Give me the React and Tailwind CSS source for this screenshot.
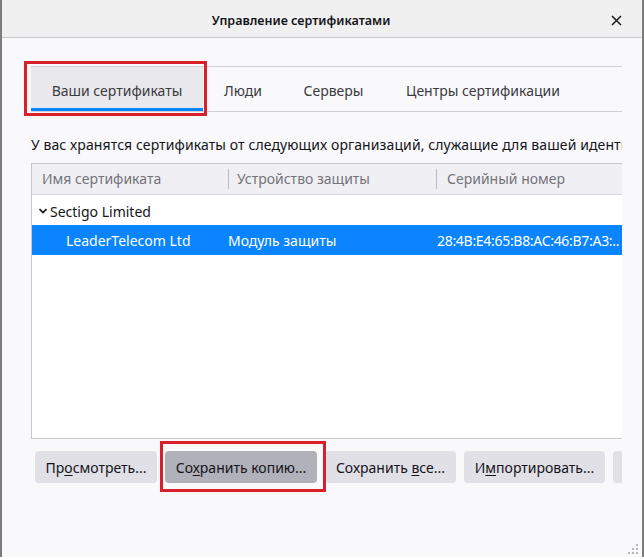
import React from "react";

const tabs = [
  { name: "Ваши сертификаты", w: "w-[172px]", active: true },
  { name: "Люди", w: "w-[80px]" },
  { name: "Серверы", w: "w-[101px]" },
  { name: "Центры сертификации", w: "w-[198px]" },
];

function Chevron() {
  return (
    <svg width="8" height="6" viewBox="0 0 8 6" className="mr-[3px]">
      <path d="M0.5 1 L4 4.5 L7.5 1" fill="none" stroke="#15141a" strokeWidth="1.6" />
    </svg>
  );
}

function Btn({ w, pressed, children }) {
  return (
    <div
      className={`${w} h-[32px] shrink-0 rounded-[4px] flex items-center justify-center text-[14px] text-[#15141a] ${
        pressed ? "bg-[#b1b1b9]" : "bg-[#e0e0e6]"
      }`}
    >
      <span className="whitespace-pre">{children}</span>
    </div>
  );
}

const U = ({ children }) => <span className="underline underline-offset-2">{children}</span>;

export default function App() {
  return (
    <div className="relative w-[644px] h-[557px] overflow-hidden bg-[#f9f9fb] border-x-2 border-[#7d7d7d] font-['Noto_Sans',sans-serif] text-[#15141a]">
      {/* Title bar */}
      <div className="h-[38px] bg-[#f0f0f0] border-b border-[#c8c8cc] flex items-center justify-center relative pr-[42px] pt-[5px]">
        <span className="text-[12.5px] font-semibold">Управление сертификатами</span>
        <svg width="11" height="11" viewBox="0 0 11 11" className="absolute right-[20px] top-[15px]">
          <path d="M1 1 L10 10 M10 1 L1 10" stroke="#1a1a1a" strokeWidth="1.5" />
        </svg>
      </div>

      {/* Body */}
      <div className="ml-[29px] w-[591px] overflow-hidden">
        {/* Tabs */}
        <div className="mt-[28px] border-y border-[#cfcfd8] flex h-[46px]">
          {tabs.map((t) => (
            <div
              key={t.name}
              className={`${t.w} shrink-0 h-[44px] flex flex-col ${t.active ? "bg-[#e9e9ed]" : ""}`}
            >
              <div className="flex-1 flex items-center justify-center pt-[5px] text-[14px] text-[#3a3a40] whitespace-nowrap">
                {t.name}
              </div>
              <div className={`h-[3px] ${t.active ? "bg-[#0a84ff]" : ""}`} />
            </div>
          ))}
        </div>

        {/* Description */}
        <div className="mt-[22px] h-[22px] text-[14px] tracking-[0.1px] whitespace-nowrap leading-[22px]">
          У вас хранятся сертификаты от следующих организаций, служащие для вашей идентификации:
        </div>

        {/* Table */}
        <div className="mt-[7px] h-[276px] w-[600px] border border-[#c8c8cc] bg-white">
          <div className="h-[31px] bg-[#f0f0f4] border-b border-[#d8d8dc] flex items-center text-[14px] text-[#73737a]">
            <div className="w-[197px] pl-[10px] border-r border-[#bcbcc0] h-[20px] leading-[20px]">Имя сертификата</div>
            <div className="w-[208px] pl-[8px] border-r border-[#bcbcc0] h-[20px] leading-[20px]">Устройство защиты</div>
            <div className="pl-[10px] h-[20px] leading-[20px]">Серийный номер</div>
          </div>
          <div className="h-[30px] flex items-center pl-[7px] pt-[2px] text-[14px]">
            <Chevron />
            Sectigo Limited
          </div>
          <div className="h-[30px] flex items-center pt-[1px] bg-[#0a84ff] text-white text-[14px] whitespace-nowrap">
            <div className="w-[196px] pl-[34px]">LeaderTelecom Ltd</div>
            <div className="w-[209px]">Модуль защиты</div>
            <div className="tracking-[-0.3px]">28:4B:E4:65:B8:AC:46:B7:A3:..</div>
          </div>
        </div>

        {/* Buttons */}
        <div className="mt-[12px] ml-[4px] flex gap-[8px] whitespace-nowrap">
          <Btn w="w-[122px]">
            Пр<U>о</U>смотреть...
          </Btn>
          <Btn w="w-[152px]" pressed>
            Со<U>х</U>ранить копию...
          </Btn>
          <Btn w="w-[131px]">
            {"Сохранить "}<U>в</U>се...
          </Btn>
          <Btn w="w-[141px]">
            И<U>м</U>портировать...
          </Btn>
          <Btn w="w-[90px]">{" "}</Btn>
        </div>
      </div>

      {/* Resize grip */}
      <svg width="10" height="10" viewBox="0 0 10 10" className="absolute right-[4px] bottom-[3px]">
        <g fill="#b8b8bc">
          <rect x="8" y="0" width="2" height="2" />
          <rect x="4" y="4" width="2" height="2" />
          <rect x="8" y="4" width="2" height="2" />
          <rect x="0" y="8" width="2" height="2" />
          <rect x="4" y="8" width="2" height="2" />
          <rect x="8" y="8" width="2" height="2" />
        </g>
      </svg>

      {/* Red annotation boxes */}
      <div className="absolute left-[22px] top-[61px] w-[183px] h-[55px] border-[3px] border-[#d7202b]" />
      <div className="absolute left-[158px] top-[441px] w-[166px] h-[51px] border-[3px] border-[#d7202b]" />
    </div>
  );
}
